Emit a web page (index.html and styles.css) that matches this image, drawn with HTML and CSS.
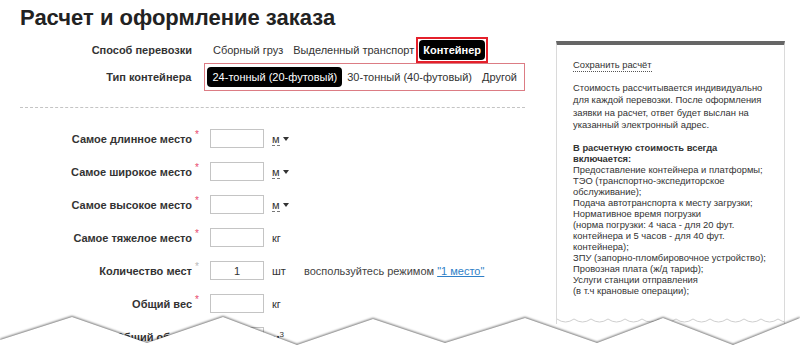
FILE: index.html
```html
<!DOCTYPE html>
<html lang="ru">
<head>
    <meta charset="UTF-8">
    <meta name="viewport" content="width=device-width, initial-scale=1.0">
    <title>Расчет и оформление заказа</title>
    <link rel="stylesheet" href="styles.css">
</head>

<body>
<div class="page">
    <h1 class="title">Расчет и оформление заказа</h1>

    <div class="content">
        <div class="main">
            <div class="opt-row">
                <div class="opt-label">Способ перевозки</div>
                <div class="opt-list">
                    <span class="opt">Сборный груз</span>
                    <span class="opt">Выделенный транспорт</span>
                    <span class="opt-frame"><span class="opt opt-active">Контейнер</span></span>
                </div>
            </div>
            <div class="opt-row">
                <div class="opt-label">Тип контейнера</div>
                <div class="opt-list opt-list-framed">
                    <span class="opt opt-active opt-light">24-тонный (20-футовый)</span>
                    <span class="opt">30-тонный (40-футовый)</span>
                    <span class="opt">Другой</span>
                </div>
            </div>

            <div class="divider"></div>

            <div class="form">
                <div class="form-row">
                    <label class="form-label" for="len">Самое длинное место</label>
                    <span class="req">*</span>
                    <input class="field" type="text" id="len">
                    <span class="unit"><span class="unit-select">м</span><span class="caret"></span></span>
                </div>
                <div class="form-row">
                    <label class="form-label" for="wid">Самое широкое место</label>
                    <span class="req">*</span>
                    <input class="field" type="text" id="wid">
                    <span class="unit"><span class="unit-select">м</span><span class="caret"></span></span>
                </div>
                <div class="form-row">
                    <label class="form-label" for="hei">Самое высокое место</label>
                    <span class="req">*</span>
                    <input class="field" type="text" id="hei">
                    <span class="unit"><span class="unit-select">м</span><span class="caret"></span></span>
                </div>
                <div class="form-row">
                    <label class="form-label" for="heavy">Самое тяжелое место</label>
                    <span class="req">*</span>
                    <input class="field" type="text" id="heavy">
                    <span class="unit">кг</span>
                </div>
                <div class="form-row">
                    <label class="form-label" for="count">Количество мест</label>
                    <span class="req req-optional">*</span>
                    <input class="field" type="text" id="count" value="1">
                    <span class="unit">шт</span>
                    <span class="hint">воспользуйтесь режимом <a href="#">"1 место"</a></span>
                </div>
                <div class="form-row">
                    <label class="form-label" for="weight">Общий вес</label>
                    <span class="req">*</span>
                    <input class="field" type="text" id="weight">
                    <span class="unit">кг</span>
                </div>
                <div class="form-row">
                    <label class="form-label" for="volume">Общий объем</label>
                    <span class="req">*</span>
                    <input class="field" type="text" id="volume">
                    <span class="unit">м<sup>3</sup></span>
                </div>
            </div>
        </div>

        <div class="aside">
            <div class="aside-inner">
                <a class="save-link" href="#">Сохранить расчёт</a>
                <p class="aside-text">Стоимость рассчитывается индивидуально<br>для каждой перевозки. После оформления<br>заявки на расчет, ответ будет выслан на<br>указанный электронный адрес.</p>
                <p class="aside-list">
                    <b>В расчетную стоимость всегда<br>включается:</b><br>
                    Предоставление контейнера и платформы;<br>
                    ТЭО (транспортно-экспедиторское<br>
                    обслуживание);<br>
                    Подача автотранспорта к месту загрузки;<br>
                    Нормативное время погрузки<br>
                    (норма погрузки: 4 часа - для 20 фут.<br>
                    контейнера и 5 часов - для 40 фут.<br>
                    контейнера);<br>
                    ЗПУ (запорно-пломбировочное устройство);<br>
                    Провозная плата (ж/д тариф);<br>
                    Услуги станции отправления<br>
                    (в т.ч крановые операции);
                </p>
            </div>
            <svg class="wave" width="227" height="6" viewBox="0 0 227 6">
                <path d="M0 1 q8.5 6 17 0 q8.5 6 17 0 q8.5 6 17 0 q8.5 6 17 0 q8.5 6 17 0 q8.5 6 17 0 q8.5 6 17 0 q8.5 6 17 0 q8.5 6 17 0 q8.5 6 17 0 q8.5 6 17 0 q8.5 6 17 0 q8.5 6 17 0 q8.5 6 17 0" fill="none" stroke="#cfcfcf" stroke-width="1"/>
            </svg>
        </div>
    </div>

    <!-- torn paper edge over the bottom of the page -->
    <svg class="tear" width="800" height="57" viewBox="0 300 800 57">
        <polygon points="0,340 72,317 147,343 223,317 297,345 373,319 445,343 525,318 597,343 663,318 733,345 800,318 800,357 0,357" fill="#fff"/>
    </svg>
</div>
</body>
</html>
```

FILE: styles.css
```css
body {
    margin: 0;
    font-family: "Liberation Sans", Arial, sans-serif;
    background-color: #fff;
    color: #333;
}

.page {
    position: relative;
    width: 800px;
    height: 357px;
    overflow: hidden;
}

.title {
    margin: 6px 0 7px 20px;
    font-size: 22px;
    line-height: 24px;
    font-weight: bold;
    color: #222;
}

.content {
    display: flex;
    align-items: flex-start;
}

.main {
    width: 505px;
    margin-left: 20px;
}

/* option switches */
.opt-row {
    display: flex;
    align-items: center;
}

.opt-label {
    width: 172px;
    text-align: right;
    font-size: 11px;
    font-weight: bold;
}

.opt-list {
    display: flex;
    align-items: center;
    margin-left: 13px;
    padding-left: 3px;
    height: 26px;
}

.opt-list-framed {
    height: 20px;
    padding: 3px 2px;
    border: 1px solid #dc7c84;
}

.opt {
    padding: 0 5px;
    font-size: 11px;
    line-height: 20px;
    white-space: nowrap;
}

.opt-active {
    display: inline-block;
    background-color: #000;
    color: #fff;
    font-weight: bold;
    border-radius: 4px;
}

.opt-light {
    font-weight: normal;
}

.opt-frame {
    display: inline-block;
    margin-left: -3px;
    padding: 1px;
    border: 2px solid #e4202b;
}

.opt-frame .opt {
    display: block;
    padding: 0 4px;
}

.divider {
    margin-top: 16px;
    border-top: 1px dashed #c4c4c4;
}

/* form */
.form {
    padding-top: 14px;
}

.form-row {
    display: grid;
    grid-template-columns: 172px 18px 54px 40px auto;
    align-items: center;
    height: 33px;
    font-size: 11px;
}

.form-label {
    text-align: right;
    font-weight: bold;
}

.req {
    align-self: start;
    padding: 8px 0 0 3px;
    font-size: 10px;
    line-height: 10px;
    color: #e8496d;
}

.req-optional {
    color: #b8b8b8;
}

.field {
    box-sizing: border-box;
    width: 54px;
    height: 19px;
    margin: 0;
    padding: 0 4px;
    border: 1px solid #c4c4c4;
    border-radius: 0;
    font-family: inherit;
    font-size: 11px;
    text-align: center;
    color: #333;
}

.unit {
    padding-left: 8px;
    white-space: nowrap;
}

.unit-select {
    border-bottom: 1px dashed #777;
}

.caret {
    display: inline-block;
    margin-left: 3px;
    vertical-align: 2px;
    border-left: 3px solid transparent;
    border-right: 3px solid transparent;
    border-top: 4px solid #333;
}

.unit sup {
    font-size: 8px;
}

.hint {
    color: #444;
    white-space: nowrap;
}

.hint a {
    color: #2f7fc7;
}

/* side panel */
.aside {
    width: 227px;
    margin-left: 31px;
    margin-top: 4px;
    border-top: 4px solid #666;
    border-left: 1px solid #dadada;
    border-right: 1px solid #dadada;
}

.aside-inner {
    padding: 13px 6px 22px 16px;
    font-size: 9.4px;
    white-space: nowrap;
}

.save-link {
    display: inline-block;
    line-height: 13px;
    color: #333;
    text-decoration: none;
    border-bottom: 1px dotted #555;
}

.aside-text {
    margin: 10px 0 0;
    line-height: 12.4px;
}

.aside-list {
    margin: 10px 0 0;
    line-height: 11px;
}

.wave {
    display: block;
}

.tear {
    position: absolute;
    left: 0;
    bottom: 0;
    filter: drop-shadow(0 -1px 1px rgba(0, 0, 0, 0.55));
}
```
